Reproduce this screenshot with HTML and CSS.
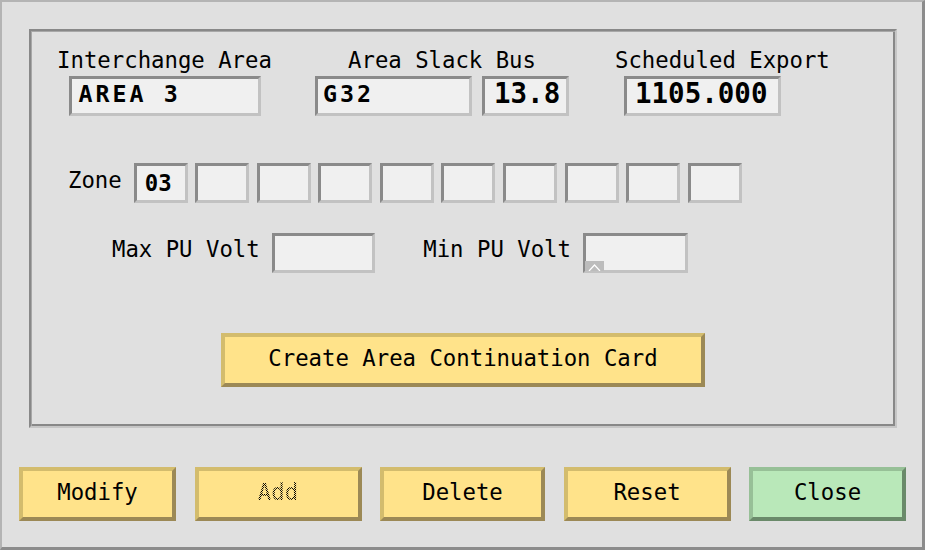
FILE: index.html
```html
<!DOCTYPE html>
<html>
<head>
<meta charset="utf-8">
<title>Area Continuation</title>
<link rel="stylesheet" href="styles.css">
</head>
<body>
<div class="window">
  <div class="panel">
    <div class="top-row">
      <div class="group g1">
        <div class="label">Interchange Area</div>
        <div class="field value small f-area">AREA 3</div>
      </div>
      <div class="group g2">
        <div class="label">Area Slack Bus</div>
        <div class="fields">
          <div class="field value small f-bus">G32</div>
          <div class="field value large f-kv">13.8</div>
        </div>
      </div>
      <div class="group g3">
        <div class="label">Scheduled Export</div>
        <div class="field value large f-export">1105.000</div>
      </div>
    </div>
    <div class="zone-row">
      <span class="label zone-label">Zone</span>
      <div class="zones">
        <div class="field zone">03</div>
        <div class="field zone"></div>
        <div class="field zone"></div>
        <div class="field zone"></div>
        <div class="field zone"></div>
        <div class="field zone"></div>
        <div class="field zone"></div>
        <div class="field zone"></div>
        <div class="field zone"></div>
        <div class="field zone"></div>
      </div>
    </div>
    <div class="volt-row">
      <span class="label max-label">Max PU Volt</span>
      <div class="field volt max-volt"></div>
      <span class="label min-label">Min PU Volt</span>
      <div class="field volt min-volt">
        <span class="marker"><svg width="19" height="10" viewBox="0 0 19 10"><rect width="19" height="10" fill="#bcbcbc"/><polyline points="4,10 9.5,4 15,10" fill="none" stroke="#ffffff" stroke-width="1.2"/></svg></span>
      </div>
    </div>
    <div class="create-row">
      <button class="btn create">Create Area Continuation Card</button>
    </div>
  </div>
  <div class="actions">
    <button class="btn w157">Modify</button>
    <button class="btn w167"><span class="stipple">Add</span></button>
    <button class="btn w165">Delete</button>
    <button class="btn w167">Reset</button>
    <button class="btn w157 close">Close</button>
  </div>
</div>
</body>
</html>
```
FILE: styles.css
```css
* { box-sizing: border-box; }
html, body { margin: 0; padding: 0; }
body {
  background: #e0e0e0;
  font-family: "DejaVu Sans Mono", monospace;
  font-size: 22.3px;
  color: #000;
}
.window {
  width: 925px;
  height: 550px;
  border-style: solid;
  border-width: 2px 3px 3px 2px;
  border-color: #b4b4b4 #8c8c8c #8c8c8c #b4b4b4;
  background: #e0e0e0;
  display: flex;
  flex-direction: column;
}
.panel {
  margin: 27px 0 0 27px;
  width: 868px;
  height: 399px;
  border-style: solid;
  border-width: 2px;
  border-color: #888888 #c6c6c6 #c6c6c6 #888888;
  box-shadow: inset 1px 1px 0 #a8a8a8, inset -2px -2px 0 #888888;
  padding-top: 17px;
  display: flex;
  flex-direction: column;
}
.label {
  line-height: 24px;
  white-space: pre;
}
.field {
  background: #f0f0f0;
  border: 3px solid;
  border-color: #8a8a8a #c2c2c2 #c2c2c2 #8a8a8a;
  height: 40px;
}
.top-row {
  display: flex;
  align-items: flex-start;
}
.group {
  display: flex;
  flex-direction: column;
  align-items: center;
}
.group .field { margin-top: 4px; }
.g1 { margin-left: 26px; width: 215px; }
.g2 { margin-left: 43px; width: 254px; }
.g3 { margin-left: 46px; align-items: flex-start; }
.g3 .field { margin-left: 9px; }
.fields { display: flex; gap: 10px; }
.value {
  display: flex;
  align-items: center;
  padding-bottom: 5px;
  font-weight: bold;
  line-height: 1;
  white-space: pre;
}
.small { font-size: 23.3px; letter-spacing: 3px; }
.large { font-size: 27.5px; }
.f-area { width: 192px; padding-left: 7px; }
.f-bus { width: 157px; padding-left: 5px; }
.f-kv { width: 87px; padding-left: 9px; }
.f-export { width: 157px; padding-left: 8px; }

.zone-row {
  display: flex;
  align-items: flex-start;
  margin-top: 47px;
}
.zone-label { margin: 5px 12px 0 37px; }
.zones { display: flex; gap: 7.56px; }
.zone {
  width: 54px;
  display: flex;
  align-items: center;
  padding-left: 8px;
  font-weight: bold;
  line-height: 1;
}

.volt-row {
  display: flex;
  align-items: flex-start;
  margin-top: 30px;
}
.max-label { margin: 4px 12.6px 0 81px; }
.min-label { margin: 4px 11.6px 0 48px; }
.max-volt { width: 103px; }
.min-volt { width: 105px; position: relative; }
.marker {
  position: absolute;
  left: -1px;
  top: 25px;
  width: 19px;
  height: 10px;
  display: block;
}
.marker svg { display: block; }

.create-row {
  display: flex;
  justify-content: center;
  margin-top: 60px;
}
.btn {
  font-family: inherit;
  font-size: 22.3px;
  color: #000;
  background: #ffe38a;
  border: 4px solid;
  border-color: #d3bc6d #9c8956 #9c8956 #d3bc6d;
  border-radius: 0;
  height: 54px;
  padding: 0 0 5px 0;
  margin: 0;
  white-space: pre;
}
.create { width: 484px; }
.actions {
  display: flex;
  justify-content: space-between;
  margin-top: 39px;
  padding: 0 16px 0 17px;
}
.w157 { width: 157px; }
.w165 { width: 165px; }
.w167 { width: 167px; }
.close {
  background: #b9e8b9;
  border-color: #97c097 #6a8a6a #6a8a6a #97c097;
}
.stipple {
  color: transparent;
  background: repeating-conic-gradient(#000 0 25%, transparent 0 50%) 0 0 / 2px 2px;
  -webkit-background-clip: text;
  background-clip: text;
}
```
